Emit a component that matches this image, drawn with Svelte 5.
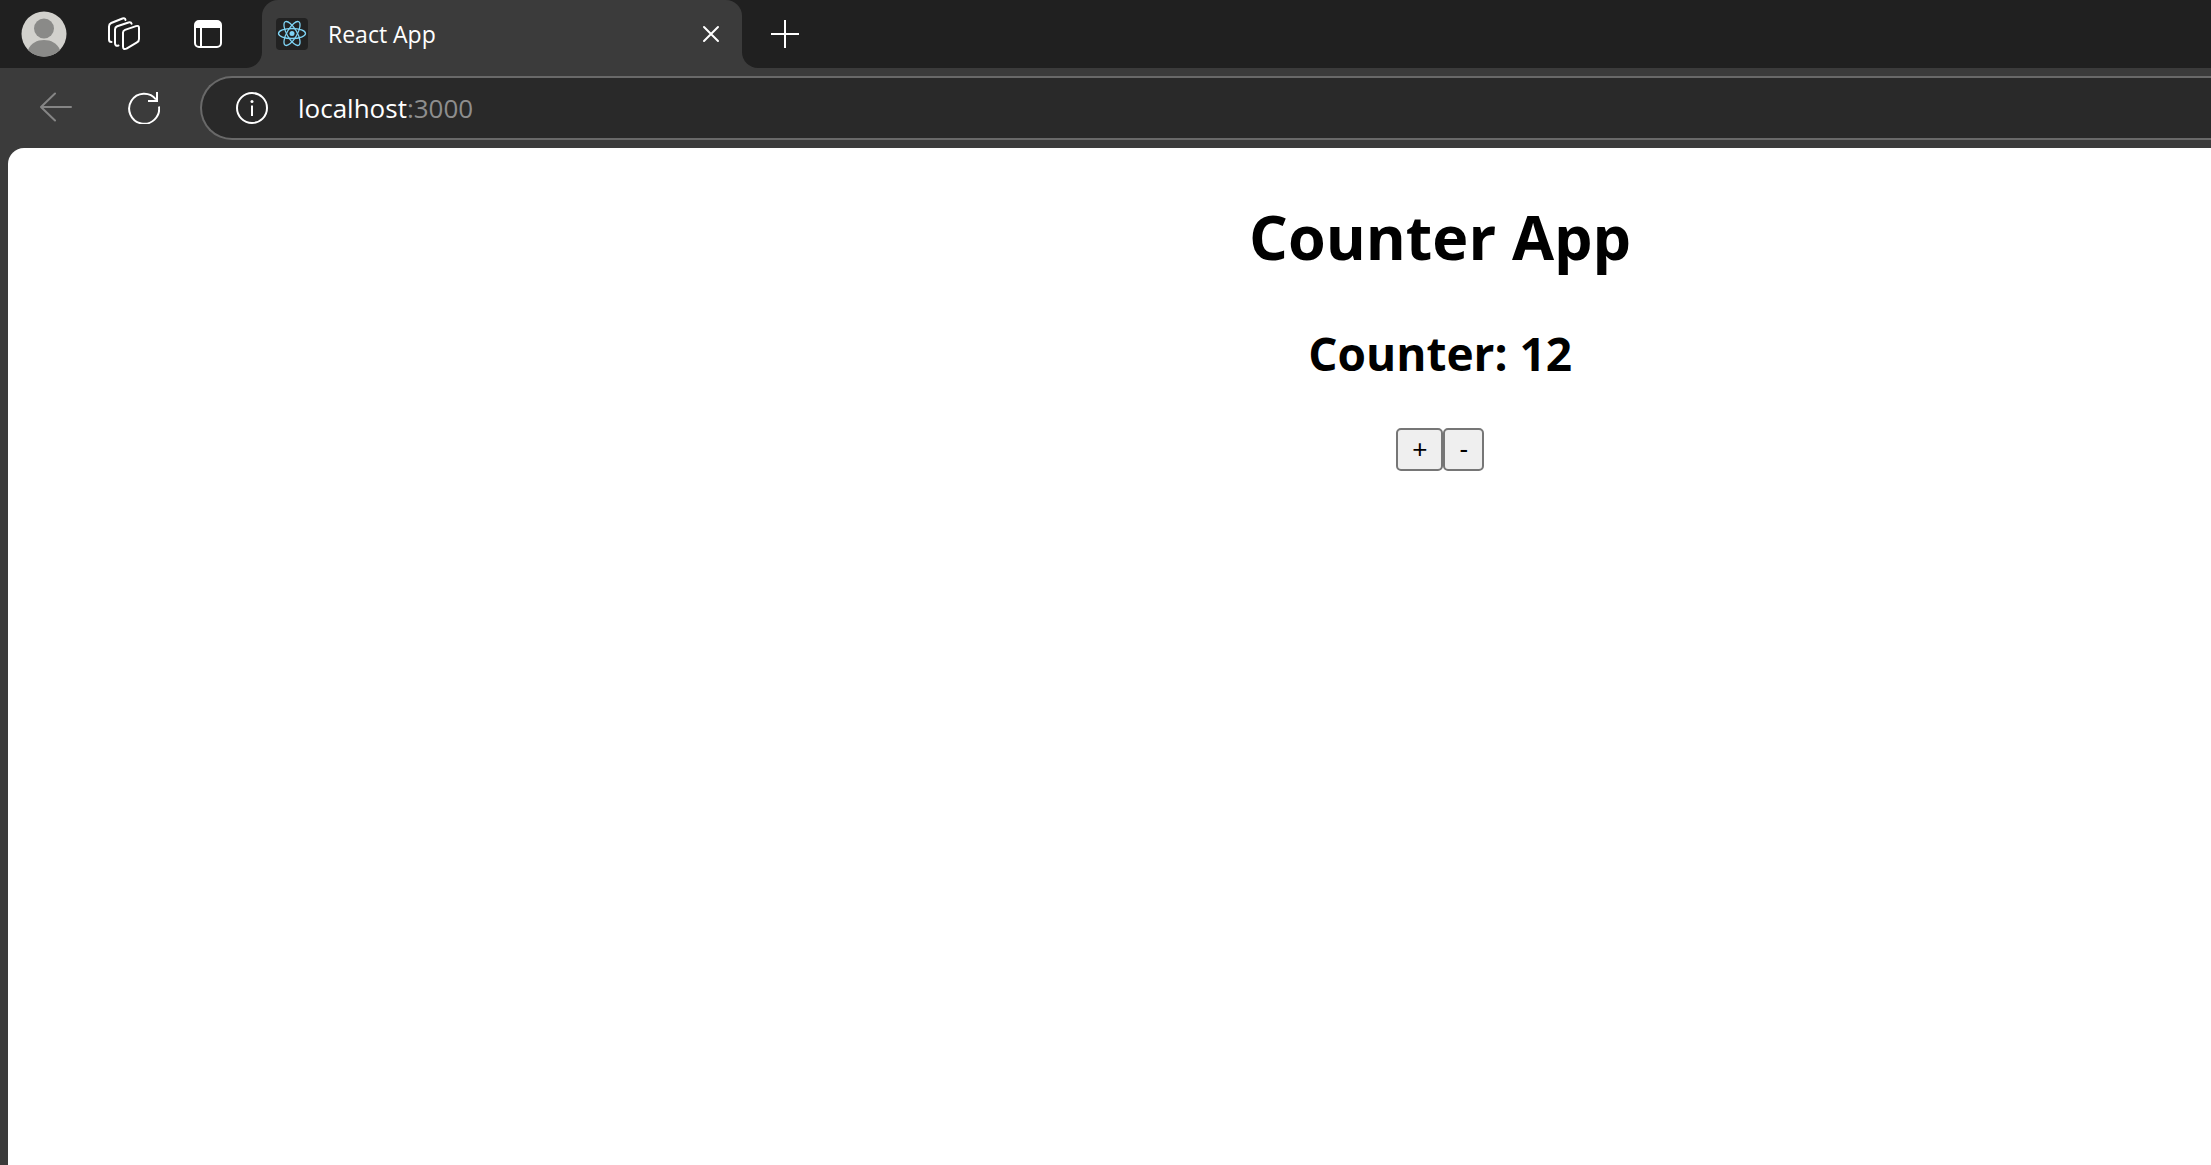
<script>
  let count = $state(12);
  let host = $state('localhost');
</script>

<svelte:head><title>React App</title></svelte:head>

<div class="browser">
  <header class="tabs">
    <div class="tools">
      <button class="icon profile" aria-label="Profile">
        <svg width="46" height="46" viewBox="0 0 46 46">
          <circle cx="23" cy="23" r="22.5" fill="#d2d1cd" />
          <circle cx="23" cy="17.5" r="10" fill="#8a8a88" />
          <path d="M7 39C10 32 16 29 23 29S36 32 39 39A22.5 22.5 0 0 1 7 39Z" fill="#8a8a88" />
        </svg>
      </button>
      <button class="icon" aria-label="Workspaces">
        <svg width="34" height="34" viewBox="0 0 34 34" fill="none" stroke="#fff" stroke-width="2" stroke-linejoin="round" stroke-linecap="round">
          <path d="M16 15.5Q16 13.700 18 12.900L29 9.100Q32 8.200 32 11V22Q32 24.500 30 25.300L19.500 31.600Q16 33 16 29.500Z" />
          <path d="M11.500 28.500Q8 29.500 8 26V12.500Q8 10.200 10.200 9.300L21.500 5.500Q24 4.800 24.600 6.800" />
          <path d="M4.500 25Q2 25 2 22.500V9.500Q2 7 4.200 6L15.500 1.500Q18 .7 18.500 3" />
        </svg>
      </button>
      <button class="icon" aria-label="Tab actions">
        <svg width="28" height="28" viewBox="0 0 28 28">
          <rect x="1" y="1" width="26" height="26" rx="4" fill="none" stroke="#fff" stroke-width="2" />
          <path d="M1 8V5Q1 1 5 1H23Q27 1 27 5V8Z" fill="#fff" />
          <path d="M7 8V27" stroke="#fff" stroke-width="2" />
        </svg>
      </button>
    </div>
    <div class="slot">
      <div class="tab">
        <svg class="favicon" width="32" height="32" viewBox="0 0 32 32" fill="none" stroke="#7fd4f5" stroke-width="1.300">
          <rect width="32" height="32" rx="4" fill="#222" stroke="none" />
          <ellipse cx="16" cy="15.500" rx="13.500" ry="5" />
          <ellipse cx="16" cy="15.500" rx="13.500" ry="5" transform="rotate(60 16 15.500)" />
          <ellipse cx="16" cy="15.500" rx="13.500" ry="5" transform="rotate(120 16 15.500)" />
          <circle cx="16" cy="15.500" r="2.500" fill="#7fd4f5" stroke="none" />
        </svg>
        <span class="title">React App</span>
        <button class="icon" aria-label="Close tab">
          <svg width="18" height="18" viewBox="0 0 18 18" stroke="#fff" stroke-width="2" stroke-linecap="round">
            <path d="M2 2L16 16M16 2L2 16" />
          </svg>
        </button>
      </div>
    </div>
    <div class="rest">
      <button class="icon" aria-label="New tab">
        <svg width="28" height="28" viewBox="0 0 28 28" stroke="#fff" stroke-width="2">
          <path d="M14 0V28M0 14H28" />
        </svg>
      </button>
    </div>
  </header>

  <nav class="toolbar">
    <button class="icon" aria-label="Back" disabled>
      <svg width="32" height="32" viewBox="0 0 32 32" fill="none" stroke="#858585" stroke-width="2" stroke-linecap="round" stroke-linejoin="round">
        <path d="M31 15H1M15 1.500L1 15L15 28.500" />
      </svg>
    </button>
    <button class="icon" aria-label="Refresh">
      <svg width="32" height="32" viewBox="0 0 32 32" fill="none" stroke="#fff" stroke-width="2">
        <path d="M31 14.500A15 15 0 1 1 28 7.500M29 0V9H20" />
      </svg>
    </button>
    <form class="address" onsubmit={(e) => e.preventDefault()}>
      <button type="button" class="icon" aria-label="Site information">
        <svg width="32" height="32" viewBox="0 0 32 32" fill="none" stroke="#fff" stroke-width="2">
          <circle cx="16" cy="16" r="15" />
          <path d="M16 13.500V24" />
          <circle cx="16" cy="9.500" r="1.500" fill="#fff" stroke="none" />
        </svg>
      </button>
      <label class="url">
        <input type="text" aria-label="Address" bind:value={host} spellcheck="false" />
        <span>:3000</span>
      </label>
    </form>
  </nav>

  <main>
    <h1>Counter App</h1>
    <h2>Counter: {count}</h2>
    <div class="actions">
      <button onclick={() => count++}>+</button><button onclick={() => count--}>-</button>
    </div>
  </main>
</div>

<style>
  :global(body) {
    margin: 0;
    background: #3b3b3b;
  }

  .browser {
    display: flex;
    flex-direction: column;
    min-height: 100vh;
    overflow: hidden;
    background: #3b3b3b;
    font-family: "Segoe UI", "Open Sans", "Noto Sans", sans-serif;
  }

  .icon {
    display: flex;
    padding: 0;
    border: 0;
    background: none;
  }

  svg {
    display: block;
    flex: none;
  }

  .tabs {
    display: flex;
    height: 68px;
  }

  .tools {
    display: flex;
    align-items: center;
    gap: 53px;
    box-sizing: border-box;
    width: 262px;
    padding-left: 21px;
    background: #202020;
    border-bottom-right-radius: 16px;
  }

  .profile {
    margin-right: -13px;
  }

  .slot {
    width: 480px;
    background: linear-gradient(#202020 50%, #3b3b3b 50%);
  }

  .tab {
    display: flex;
    align-items: center;
    box-sizing: border-box;
    height: 68px;
    padding: 0 22px 0 14px;
    background: #3b3b3b;
    border-radius: 16px 16px 0 0;
  }

  .title {
    flex: 1;
    padding-left: 20px;
    color: #fff;
    font-size: 23px;
    line-height: 32px;
  }

  .rest {
    display: flex;
    flex: 1;
    align-items: center;
    padding-left: 29px;
    background: #202020;
    border-bottom-left-radius: 16px;
  }

  .toolbar {
    display: flex;
    align-items: center;
    gap: 56px;
    height: 80px;
    padding-left: 40px;
  }

  .address {
    display: flex;
    flex: 1;
    align-items: center;
    gap: 30px;
    box-sizing: border-box;
    height: 64px;
    margin-left: -16px;
    padding-left: 34px;
    background: #292929;
    border: 2px solid #696969;
    border-right: 0;
    border-radius: 32px 0 0 32px;
  }

  .url {
    display: flex;
    color: #8e8e8e;
    font-size: 26px;
    line-height: 40px;
  }

  .url input {
    field-sizing: content;
    padding: 0;
    border: 0;
    outline: 0;
    background: none;
    color: #fff;
    font: inherit;
  }

  main {
    flex: 1;
    margin-left: 8px;
    padding: 47px 2px 0 30%;
    background: #fff;
    border-top-left-radius: 16px;
    color: #000;
    text-align: center;
  }

  h1 {
    margin: 0 0 40px;
    font-size: 61px;
    line-height: 84px;
  }

  h2 {
    margin: 0 0 41px;
    font-size: 46px;
    line-height: 68px;
  }

  .actions {
    display: flex;
    justify-content: center;
  }

  .actions button {
    box-sizing: border-box;
    height: 43px;
    padding: 0 14px 2px;
    border: 2px solid #767676;
    border-radius: 5px;
    background: #efefef;
    color: #000;
    font: 26px/36px "Liberation Sans", Arial, sans-serif;
  }
</style>
